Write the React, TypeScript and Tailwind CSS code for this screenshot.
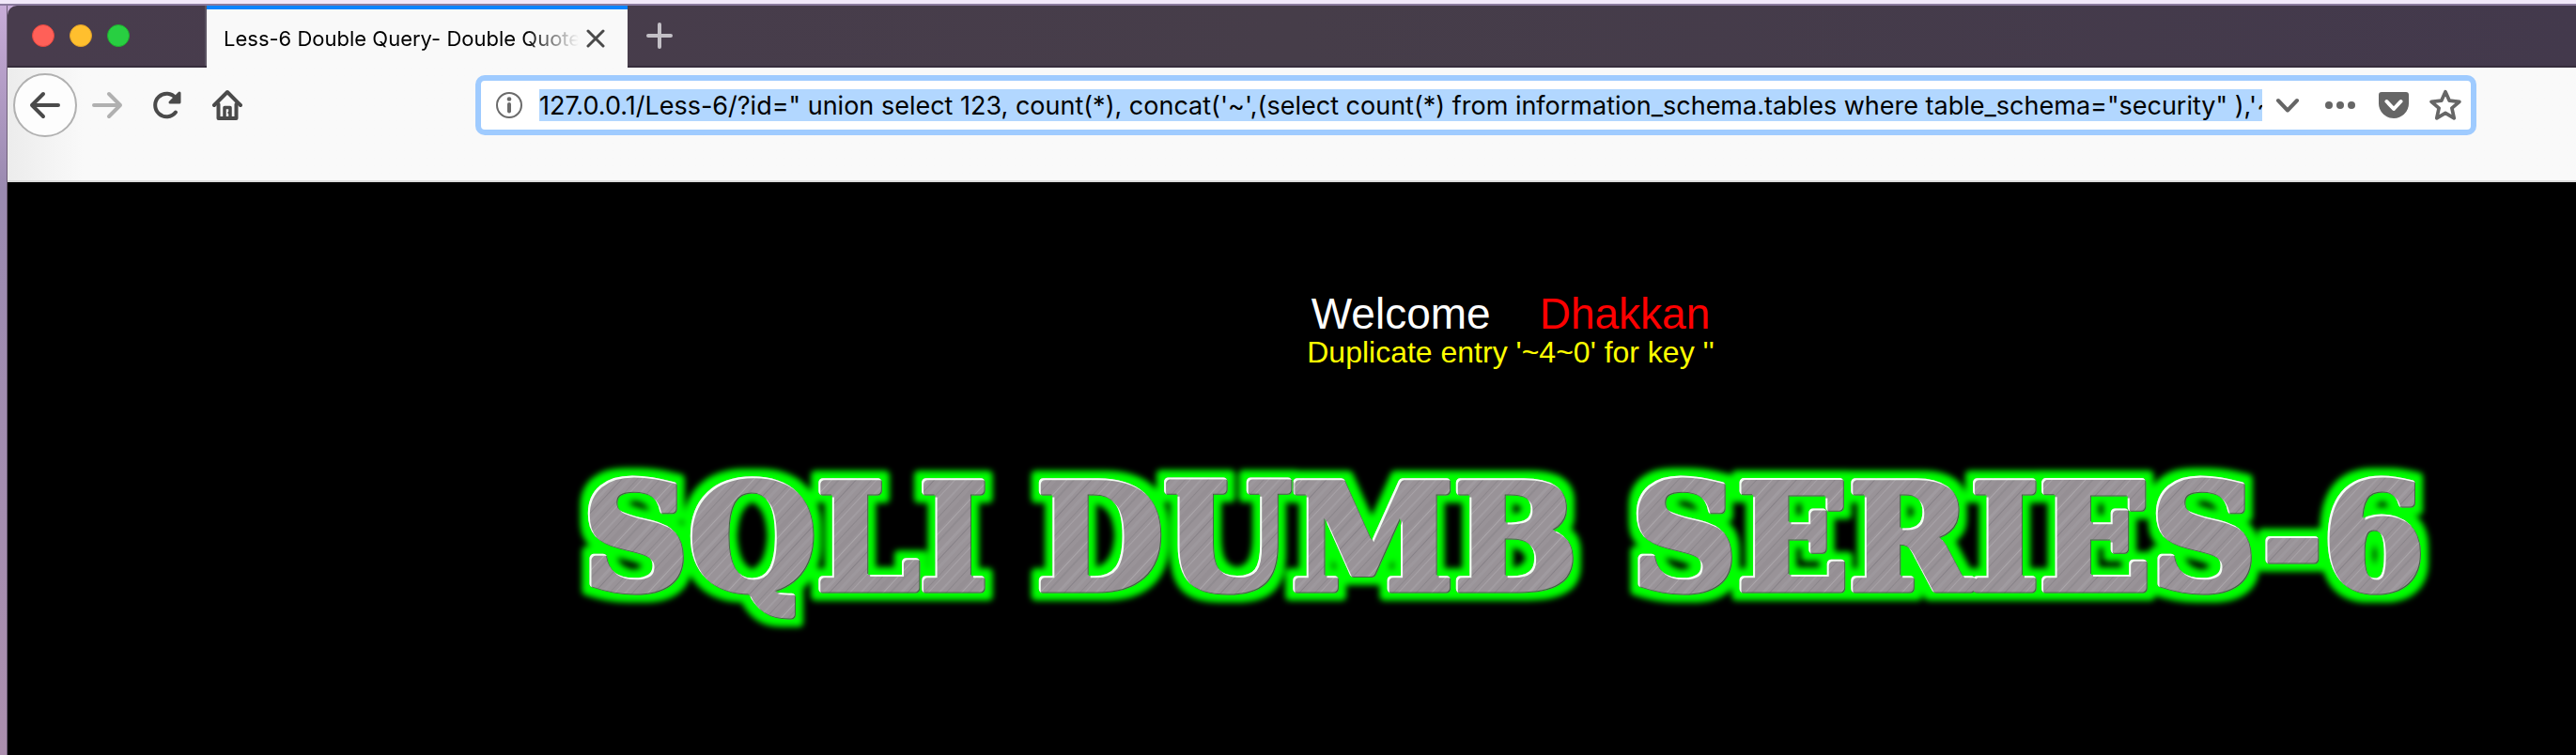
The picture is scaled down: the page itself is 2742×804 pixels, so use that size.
import type { ReactNode } from 'react';

const url =
  '127.0.0.1/Less-6/?id=" union select 123, count(*), concat(\'~\',(select count(*) from information_schema.tables where table_schema="security" ),\'~';

function IconButton({ label, className, children }: { label: string; className: string; children: ReactNode }) {
  return (
    <button type="button" aria-label={label} className={`flex shrink-0 items-center justify-center ${className}`}>
      {children}
    </button>
  );
}

function TabBar() {
  return (
    <header className="flex h-[66px] items-stretch rounded-tl-[10px] border-b-2 border-[#362d3c] bg-linear-to-r from-[#483c4d] via-[#463d49] to-[#43394c]">
      <div className="flex w-[212px] shrink-0 items-center gap-4 border-r-2 border-[#5d5563] pl-[26px]">
        <button type="button" aria-label="Close window" className="size-6 rounded-full border border-[#e2463f] bg-[#ff6058]" />
        <button type="button" aria-label="Minimise window" className="size-6 rounded-full border border-[#e0a028] bg-[#ffbf2e]" />
        <button type="button" aria-label="Zoom window" className="size-6 rounded-full border border-[#1fae2e] bg-[#28cf41]" />
      </div>
      <div className="-mb-[2px] flex w-[448px] shrink-0 items-center border-t-4 border-[#0a84ff] bg-[#f9f9f9] pl-[18px]">
        <span className="w-[378px] overflow-hidden bg-linear-to-r from-black from-85% to-transparent bg-clip-text text-[22px] leading-8 whitespace-nowrap text-transparent">
          Less-6 Double Query- Double Quote
        </span>
        <IconButton label="Close tab" className="size-9">
          <svg width="20" height="20" viewBox="0 0 20 20" fill="none" stroke="#4a4a4a" strokeWidth="3" strokeLinecap="round">
            <path d="M2 2l16 16M18 2L2 18" />
          </svg>
        </IconButton>
      </div>
      <IconButton label="New tab" className="w-[68px]">
        <svg width="28" height="28" viewBox="0 0 28 28" fill="none" stroke="#c3c0c6" strokeWidth="4" strokeLinecap="round">
          <path d="M14 2v24M2 14h24" />
        </svg>
      </IconButton>
    </header>
  );
}

function Toolbar() {
  return (
    <nav className="h-[122px] border-b-2 border-[#dcdcdc] bg-linear-to-r from-[#ececec] to-[#f9f9f9] to-[80px] pt-[6px]">
      <div className="flex items-center pr-[106px] pl-[6px]">
        <IconButton label="Back" className="size-[68px] rounded-full border-2 border-[#b1b1b1] bg-[#fdfdfd]">
          <svg width="34" height="30" viewBox="0 0 34 30" fill="none" stroke="#4a4a4a" strokeWidth="4" strokeLinecap="round" strokeLinejoin="round">
            <path d="M31 15H3M15 3L3 15l12 12" />
          </svg>
        </IconButton>
        <IconButton label="Forward" className="w-16">
          <svg width="34" height="30" viewBox="0 0 34 30" fill="none" stroke="#b0b0b0" strokeWidth="4" strokeLinecap="round" strokeLinejoin="round">
            <path d="M3 15h28M19 3l12 12-12 12" />
          </svg>
        </IconButton>
        <IconButton label="Reload" className="w-16">
          <svg width="32" height="30" viewBox="0 0 32 30" fill="none" stroke="#4a4a4a" strokeWidth="4" strokeLinecap="round" strokeLinejoin="round">
            <path d="M25 22.500A12.200 12.200 0 1 1 25 7.500" />
            <path d="M29 2v10H19z" fill="#4a4a4a" stroke="#4a4a4a" strokeWidth="3" />
          </svg>
        </IconButton>
        <IconButton label="Home" className="w-16">
          <svg width="34" height="34" viewBox="0 0 34 34" fill="none" stroke="#4a4a4a" strokeWidth="4" strokeLinecap="round" strokeLinejoin="round">
            <path d="M3 17L17 3l14 14" />
            <path d="M7.500 16v15h19V16" />
            <path d="M14 30V19.500h6V30" strokeWidth="3.500" />
            <circle cx="18.500" cy="25" r="1.200" fill="#4a4a4a" stroke="none" />
          </svg>
        </IconButton>
        <div className="ml-[232px] flex h-16 min-w-0 flex-1 items-center rounded-[10px] border-[6px] border-[#9fcbff] bg-white">
          <IconButton label="Site information" className="ml-[10px] w-10">
            <svg width="30" height="30" viewBox="0 0 30 30" fill="none" stroke="#6b6b6b" strokeWidth="2">
              <circle cx="15" cy="15" r="13" />
              <path d="M15 14v7.500" strokeWidth="4" strokeLinecap="round" />
              <circle cx="15" cy="8.500" r="2.300" fill="#6b6b6b" stroke="none" />
            </svg>
          </IconButton>
          <input
            aria-label="Address"
            readOnly
            value={url}
            className="ml-3 h-[34px] min-w-0 flex-1 bg-[#b2d7ff] pt-px text-[27px] leading-[33px] text-black outline-none"
          />
          <IconButton label="Show history" className="w-[54px]">
            <svg width="26" height="16" viewBox="0 0 26 16" fill="none" stroke="#666" strokeWidth="4" strokeLinecap="round" strokeLinejoin="round">
              <path d="M3 3l10 10.500L23 3" />
            </svg>
          </IconButton>
          <IconButton label="Page actions" className="w-[57px]">
            <svg width="32" height="8" viewBox="0 0 32 8" fill="#666">
              <circle cx="4" cy="4" r="4" />
              <circle cx="16" cy="4" r="4" />
              <circle cx="28" cy="4" r="4" />
            </svg>
          </IconButton>
          <IconButton label="Save to Pocket" className="w-[57px]">
            <svg width="32" height="28" viewBox="0 0 32 28">
              <path d="M3 0h26a3 3 0 0 1 3 3v9a16 16 0 0 1-32 0V3a3 3 0 0 1 3-3z" fill="#666" />
              <path d="M8.500 10l7.500 8 7.500-8" fill="none" stroke="#fff" strokeWidth="4" strokeLinecap="round" strokeLinejoin="round" />
            </svg>
          </IconButton>
          <IconButton label="Bookmark this page" className="w-[54px]">
            <svg width="34" height="34" viewBox="0 0 32 32" fill="none" stroke="#666" strokeWidth="3.500" strokeLinejoin="round">
              <path d="M16 2.500l4 9 10 1-7.500 6.500 2.200 10-8.700-5.200-8.700 5.200 2.200-10L2 12.500l10-1z" />
            </svg>
          </IconButton>
        </div>
      </div>
    </nav>
  );
}

function Logo() {
  return (
    <svg width="2020" height="220" viewBox="600 470 2020 220" className="shrink-0" role="img" aria-label="SQLI DUMB SERIES-6">
      <defs>
        <pattern id="brushed" width="61" height="61" patternUnits="userSpaceOnUse" patternTransform="rotate(43)">
          <rect width="61" height="61" fill="#999398" />
          <rect x="3" width="2" height="61" fill="#a19ca1" />
          <rect x="9" width="1" height="61" fill="#8b868b" />
          <rect x="14" width="5" height="61" fill="#958f94" />
          <rect x="21" width="1" height="61" fill="#aba7ab" />
          <rect x="26" width="2" height="61" fill="#908b90" />
          <rect x="34" width="3" height="61" fill="#a09ba0" />
          <rect x="40" width="1" height="61" fill="#868187" />
          <rect x="45" width="3" height="61" fill="#9d989d" />
          <rect x="52" width="1" height="61" fill="#8d888d" />
          <rect x="56" width="1" height="61" fill="#a7a2a7" />
        </pattern>
        <filter id="neon" filterUnits="userSpaceOnUse" x="600" y="470" width="2020" height="220" colorInterpolationFilters="sRGB">
          <feMorphology in="SourceAlpha" operator="dilate" radius="8" result="wide" />
          <feGaussianBlur in="wide" stdDeviation="3" result="soft" />
          <feFlood floodColor="#00ff00" />
          <feComposite in2="soft" operator="in" result="glow" />
          <feOffset in="SourceAlpha" dx="2" dy="2" result="down" />
          <feFlood floodColor="#f2fff2" />
          <feComposite in2="SourceAlpha" operator="in" />
          <feComposite in2="down" operator="out" result="light" />
          <feOffset in="SourceAlpha" dx="-1" dy="-1" result="up" />
          <feFlood floodColor="#3f6a3f" />
          <feComposite in2="SourceAlpha" operator="in" />
          <feComposite in2="up" operator="out" result="dark" />
          <feMerge>
            <feMergeNode in="glow" />
            <feMergeNode in="SourceGraphic" />
            <feMergeNode in="dark" />
            <feMergeNode in="light" />
          </feMerge>
        </filter>
      </defs>
      <g
        filter="url(#neon)"
        fill="url(#brushed)"
        stroke="url(#brushed)"
        strokeWidth="9"
        strokeLinejoin="round"
        className="font-['DejaVu_Serif',serif] text-[156px] font-bold"
      >
        <text x="622" y="627">SQLI</text>
        <text x="1105" y="627">DUMB</text>
        <text x="1738" y="627">SERIES-6</text>
      </g>
    </svg>
  );
}

export default function App() {
  return (
    <div className="flex min-h-screen flex-col overflow-hidden bg-linear-to-b from-[#c9add9] via-[#9a8ab0] via-25% to-[#ab8fae] font-[Inter,sans-serif]">
      <div className="h-[6px] border-b-2 border-[#8b7b9e] bg-[#f1e8f9]" />
      <div className="ml-[7px] flex flex-1 flex-col border-l border-[#6f5f78]">
        <TabBar />
        <Toolbar />
        <main className="flex flex-1 flex-col items-center bg-black pt-[114px] pl-[466px] font-['Liberation_Sans',sans-serif]">
          <h1 className="flex gap-[52px] text-[46px] leading-[52px]">
            <span className="text-white">Welcome</span>
            <span className="text-[#ff0000]">Dhakkan</span>
          </h1>
          <p className="text-[32px] leading-[30px] text-[#ffff00]">Duplicate entry '~4~0' for key ''</p>
          <div className="mt-20 flex justify-center">
            <Logo />
          </div>
        </main>
      </div>
    </div>
  );
}
